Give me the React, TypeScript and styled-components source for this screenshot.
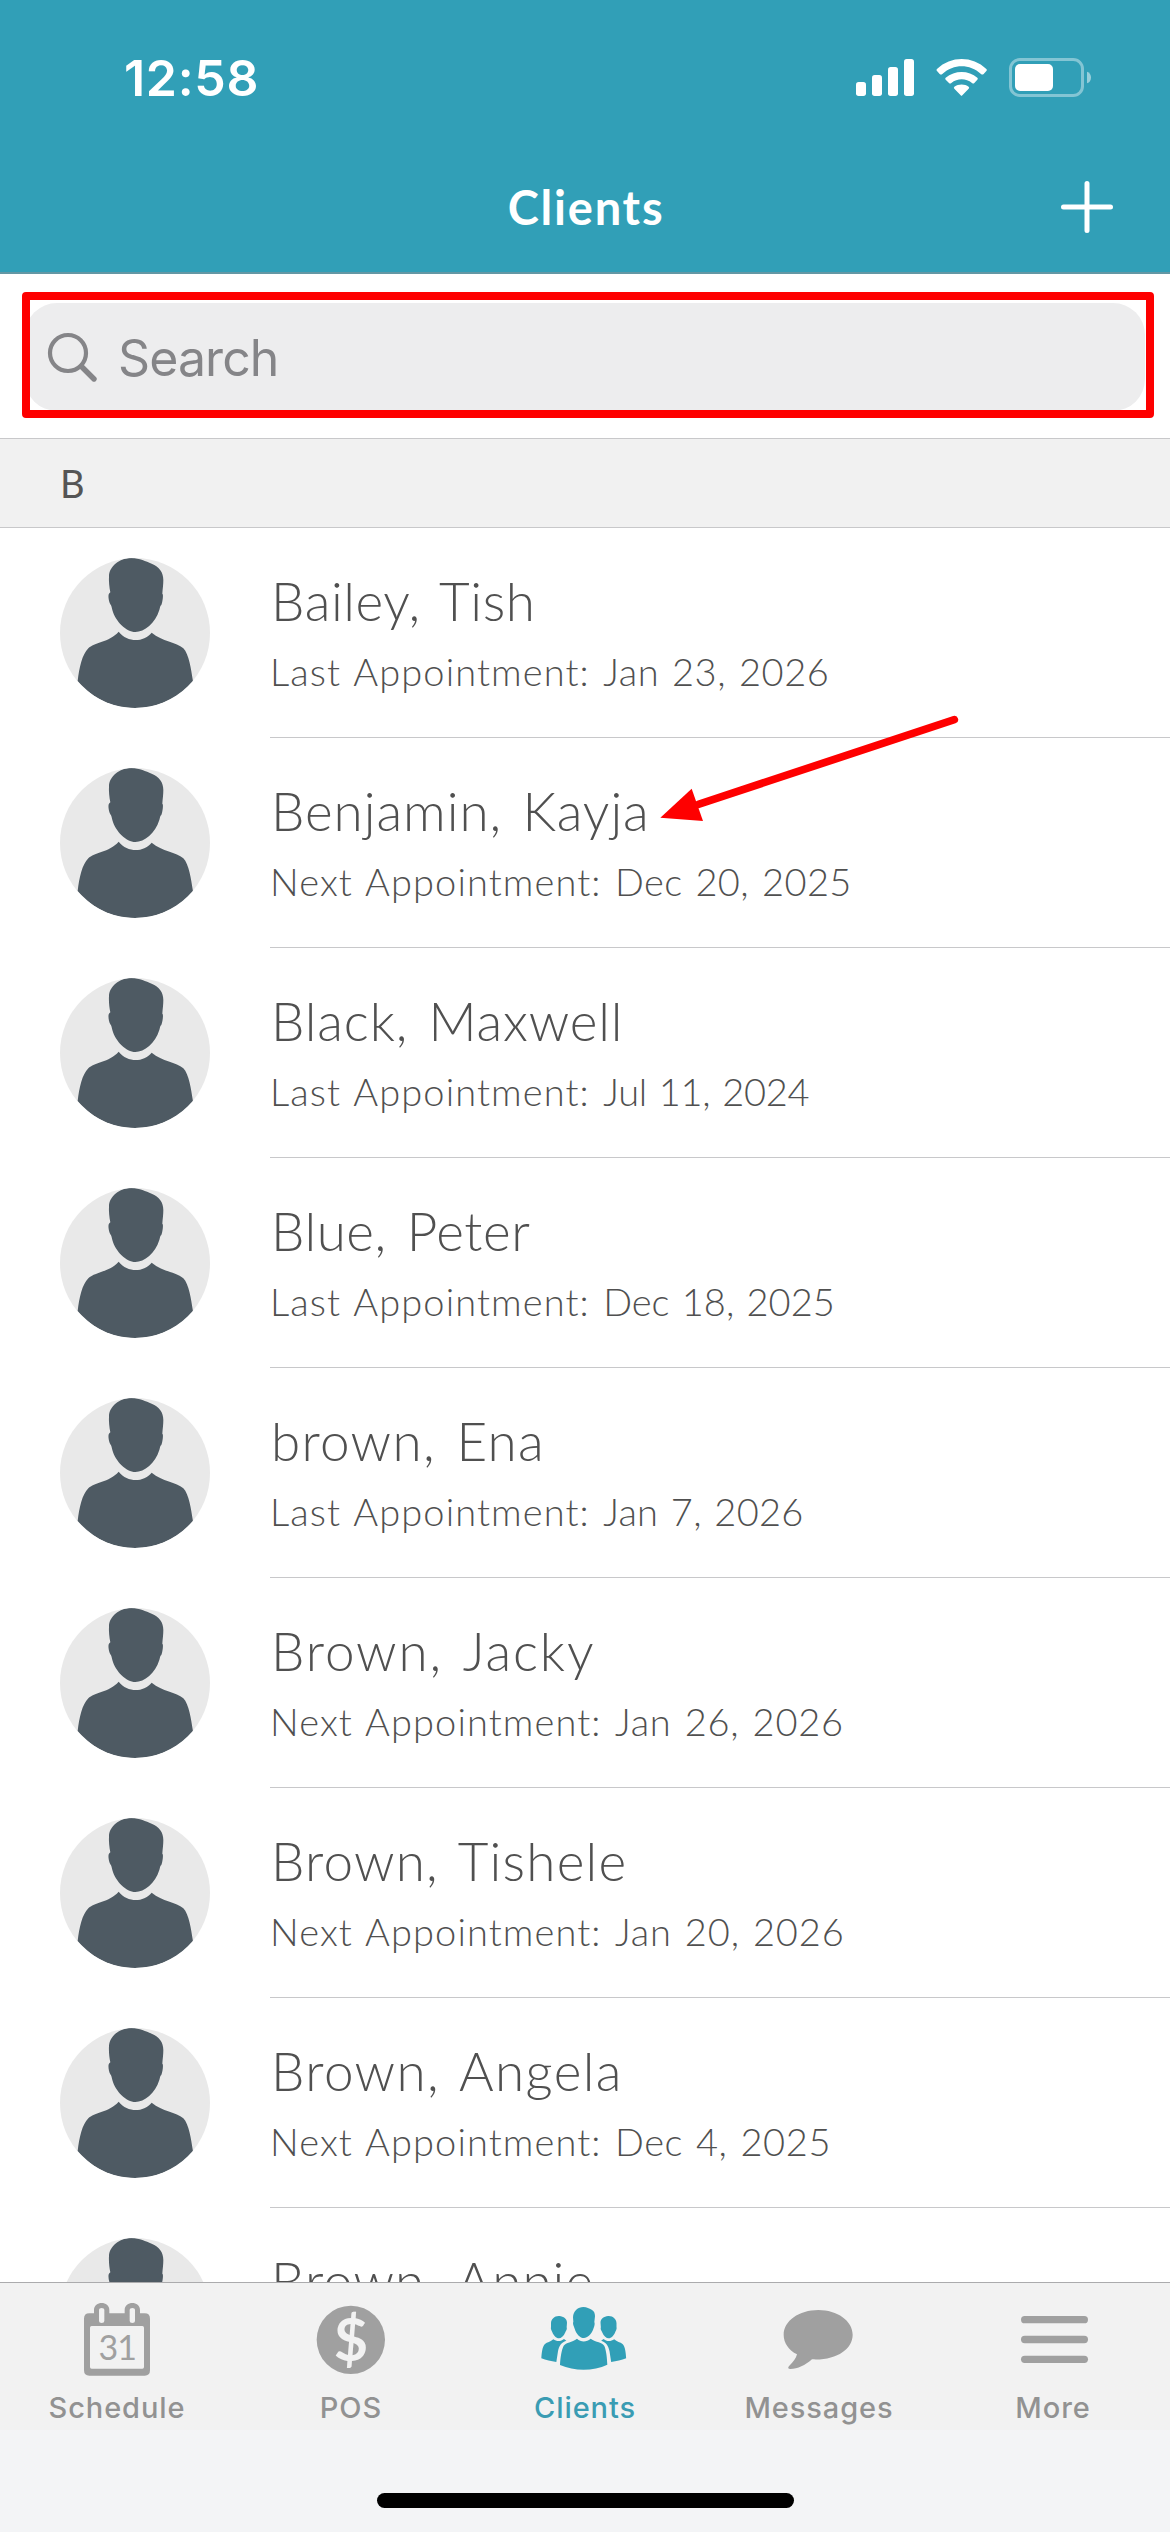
import React from "react";
import styled, { createGlobalStyle } from "styled-components";

const GlobalStyle = createGlobalStyle`
  body { margin: 0; background: #fff; }
  * { box-sizing: border-box; }
  svg { display: block; }
`;

const teal = "#319fb7";
const tabGray = "#a0a0a0";

const Screen = styled.div`
  position: relative;
  display: flex;
  flex-direction: column;
  width: 1170px;
  height: 2532px;
  overflow: hidden;
  background: #fff;
  font-family: Lato, "Noto Sans", sans-serif;
`;

const Header = styled.header`
  display: flex;
  flex-direction: column;
  height: 274px;
  flex: none;
  background: ${teal};
  border-bottom: 2px solid #6397a4;
  color: #fff;
`;

const StatusBar = styled.div`
  display: flex;
  justify-content: space-between;
  align-items: center;
  height: 141px;
  padding: 14px 78px 0 124px;
`;

const Time = styled.time`
  font: 600 50px/60px Inter, sans-serif;
  letter-spacing: 0.7px;
`;

const NavBar = styled.div`
  display: grid;
  grid-template-columns: 1fr auto 1fr;
  align-items: center;
  height: 131px;
  padding: 0 56px;
`;

const Title = styled.h1`
  grid-column: 2;
  margin: 0;
  padding-left: 2px;
  font-size: 47px;
  line-height: 60px;
  font-weight: 700;
  letter-spacing: 1.8px;
`;

const AddButton = styled.button`
  justify-self: end;
  padding: 0;
  border: 0;
  background: none;
`;

const SearchArea = styled.div`
  position: relative;
  flex: none;
  height: 164px;
  padding: 29px 25px 0;
`;

const SearchField = styled.div`
  display: flex;
  align-items: center;
  gap: 20px;
  height: 108px;
  padding-left: 22px;
  border-radius: 32px;
  background: #ededee;
  font: 400 50px/60px Inter, sans-serif;
  letter-spacing: -0.9px;
  color: #858588;
`;

const SearchLabel = styled.span`
  padding-top: 1px;
`;

const Highlight = styled.div`
  position: absolute;
  left: 22px;
  top: 18px;
  width: 1132px;
  height: 126px;
  border: 8px solid #fe0000;
  border-radius: 4px;
`;

const SectionHeader = styled.h2`
  display: flex;
  align-items: center;
  flex: none;
  height: 90px;
  margin: 0;
  padding: 0 0 1px 60px;
  border: solid #c8c8ca;
  border-width: 1px 0;
  background: #f1f1f1;
  color: #555;
  font-size: 38px;
  font-weight: 400;
`;

const List = styled.ul`
  flex: 1;
  min-height: 0;
  margin: 0;
  padding: 0;
  overflow: hidden;
  list-style: none;
`;

const Row = styled.li`
  display: flex;
  height: 210px;
  padding-left: 60px;
  gap: 60px;
`;

const Avatar = styled.svg`
  flex: none;
  width: 150px;
  height: 150px;
  margin-top: 30px;
`;

const Details = styled.div`
  flex: 1;
  padding-top: 41px;
  border-bottom: 1px solid #c8c8ca;
  color: #505050;
  white-space: nowrap;
`;

const Name = styled.div<{ $tracking: number }>`
  padding-left: 1px;
  font-size: 53px;
  line-height: 64px;
  font-weight: 300;
  word-spacing: 5px;
  letter-spacing: ${(p) => p.$tracking}px;
`;

const Appointment = styled.div`
  margin-top: 13px;
  font-size: 38px;
  line-height: 50px;
  font-weight: 300;
  word-spacing: 2px;
  letter-spacing: 1.1px;
`;

const AppointmentDate = styled.span<{ $tracking: number }>`
  letter-spacing: ${(p) => p.$tracking}px;
`;

const TabBar = styled.nav`
  display: grid;
  grid-template-columns: repeat(5, 1fr);
  flex: none;
  height: 148px;
  padding-top: 13px;
  border-top: 1px solid #ababad;
  background: #f2f2f2;
`;

const Tab = styled.div<{ $active?: boolean }>`
  display: flex;
  flex-direction: column;
  align-items: center;
  gap: 8px;
  color: ${(p) => (p.$active ? "#3a9cb3" : "#929292")};
  font: 500 29px/40px Inter, sans-serif;
  letter-spacing: 0.9px;
`;

const HomeArea = styled.div`
  display: flex;
  justify-content: center;
  align-items: flex-end;
  flex: none;
  height: 102px;
  padding-bottom: 24px;
  background: #f3f4f6;
`;

const HomeIndicator = styled.div`
  width: 417px;
  height: 15px;
  border-radius: 8px;
  background: #000;
`;

const Arrow = styled.svg`
  position: absolute;
  left: 640px;
  top: 690px;
`;

type Client = {
  name: string;
  nameTracking: number;
  kind?: "Last" | "Next";
  date?: string;
  dateTracking?: number;
};

const clients: Client[] = [
  { name: "Bailey, Tish", nameTracking: 0.6, kind: "Last", date: "Jan 23, 2026", dateTracking: 0.57 },
  { name: "Benjamin, Kayja", nameTracking: 0.95, kind: "Next", date: "Dec 20, 2025", dateTracking: 0.45 },
  { name: "Black, Maxwell", nameTracking: 0.85, kind: "Last", date: "Jul 11, 2024", dateTracking: -0.3 },
  { name: "Blue, Peter", nameTracking: 0.55, kind: "Last", date: "Dec 18, 2025", dateTracking: 0 },
  { name: "brown, Ena", nameTracking: 1.3, kind: "Last", date: "Jan 7, 2026", dateTracking: 0.28 },
  { name: "Brown, Jacky", nameTracking: 1.9, kind: "Next", date: "Jan 26, 2026", dateTracking: 0.8 },
  { name: "Brown, Tishele", nameTracking: 1.2, kind: "Next", date: "Jan 20, 2026", dateTracking: 0.85 },
  { name: "Brown, Angela", nameTracking: 1.4, kind: "Next", date: "Dec 4, 2025", dateTracking: 0.6 },
  { name: "Brown, Annie", nameTracking: 1.05 },
];

const StatusIcons = () => (
  <svg width="236" height="40" viewBox="228 174 708 120" fill="#fff">
    <rect x="228" y="246" width="30" height="42" rx="8" />
    <rect x="276" y="225" width="30" height="63" rx="8" />
    <rect x="324" y="201" width="30" height="87" rx="8" />
    <rect x="372" y="177" width="30" height="111" rx="8" />
    <path d="M471 207 C513 167 577 167 619 207 Q622 210 619 213 L611 222 Q607 225 603 222 C569 191 521 191 487 222 Q483 225 479 222 L471 213 Q468 210 471 207Z" />
    <path d="M497 233 C524 210 566 210 592 233 Q595 236 592 239 L583 249 Q580 252 576 249 C558 234 532 234 514 249 Q510 252 507 249 L497 239 Q494 236 497 233Z" />
    <path d="M523 260 C535 251 555 251 566 260 Q569 263 566 266 L547 286 Q544.500 289 542 286 L523 266 Q520 263 523 260Z" />
    <rect x="691.500" y="178.500" width="216" height="108" rx="28" fill="none" stroke="#fff" strokeOpacity=".4" strokeWidth="9" />
    <rect x="705" y="192" width="114" height="81" rx="15" />
    <path d="M921 215 C937 219 937 246 921 250Z" fillOpacity=".5" />
  </svg>
);

const Person = () => (
  <Avatar viewBox="60 54 450 450">
    <defs>
      <clipPath id="disc"><circle cx="285" cy="279" r="225" /></clipPath>
    </defs>
    <circle cx="285" cy="279" r="225" fill="#e9e9e9" />
    <g fill="#4e5a63" clipPath="url(#disc)">
      <path d="M207 108 C208 80 238 54 274 54 C300 55 317 64 335 71 C358 80 370 97 370 120 C370 134 368 148 367 161 C371 162 368 185 364 195 C360 197 360 204 358 210 C346 249 313 276 286 276 C259 276 226 244 217 210 C215 203 215 198 211 193 C206 184 203 164 208 160 L211 157 C208 142 206 124 207 108Z" />
      <path d="M236 275 C263 308 309 308 335 278 C367 305 409 306 430 325 C447 343 453 386 459 424 C410 480 350 504 285 504 C220 504 163 480 113 423 C118 383 126 344 145 325 C162 307 207 307 236 275Z" />
    </g>
  </Avatar>
);

const TabIcon = ({ x, color = tabGray, children }: { x: number; color?: string; children: React.ReactNode }) => (
  <svg width="102" height="84" viewBox={`${x} 198 306 252`} fill={color}>{children}</svg>
);

const SideClient = () => (
  <>
    <path d="M303 280 C303 267 314 257 328 258 C341 260 351 266 351 278 L350 291 C352 299 348 301 346 307 C341 319 333 325 327 325 C318 325 311 317 307 307 C306 302 301 298 303 290Z" />
    <path d="M310 328 C321 336 334 334 342 327 L349 332 C333 338 327 348 324 364 L319 396 C303 394 288 390 274 385 C275 368 277 349 285 342 C291 337 302 336 310 328Z" />
  </>
);

export default function App() {
  return (
    <Screen>
      <GlobalStyle />
      <Header>
        <StatusBar>
          <Time>12:58</Time>
          <StatusIcons />
        </StatusBar>
        <NavBar>
          <Title>Clients</Title>
          <AddButton aria-label="Add client">
            <svg width="54" height="54" viewBox="0 0 54 54" stroke="#fff" strokeWidth="5" strokeLinecap="round">
              <path d="M27 3.500V50.500M3.500 27H50.500" />
            </svg>
          </AddButton>
        </NavBar>
      </Header>

      <SearchArea>
        <SearchField>
          <svg width="51" height="51" viewBox="0 0 51 51" fill="none" stroke="#858588" strokeLinecap="round">
            <circle cx="21" cy="21" r="18" strokeWidth="4.200" />
            <path d="M34.500 34.500L47 47" strokeWidth="5.400" />
          </svg>
          <SearchLabel>Search</SearchLabel>
        </SearchField>
        <Highlight />
      </SearchArea>

      <SectionHeader>B</SectionHeader>

      <List>
        {clients.map((c) => (
          <Row key={c.name}>
            <Person />
            <Details>
              <Name $tracking={c.nameTracking}>{c.name}</Name>
              {c.date && (
                <Appointment>
                  {c.kind} Appointment: <AppointmentDate $tracking={c.dateTracking ?? 0}>{c.date}</AppointmentDate>
                </Appointment>
              )}
            </Details>
          </Row>
        ))}
      </List>

      <TabBar>
        <Tab>
          <TabIcon x={198}>
            <path fillRule="evenodd" d="M268 250 H282 V240 C282 212 328 212 328 240 V250 H374 V240 C374 212 420 212 420 240 V250 H434 Q450 250 450 266 V421 Q450 437 434 437 H268 Q252 437 252 421 V266 Q252 250 268 250Z M297 239 V273 Q297 279 305 279 Q313 279 313 273 V239 Q313 234 305 234 Q297 234 297 239Z M389 239 V273 Q389 279 397 279 Q405 279 405 273 V239 Q405 234 397 234 Q389 234 389 239Z M270 293 V411 Q270 416 275 416 H427 Q432 416 432 411 V293 Q432 288 427 288 H275 Q270 288 270 293Z" />
            <text x="352" y="390" textAnchor="middle" fontFamily="Lato" fontSize="102" fontWeight="400" letterSpacing="-3">31</text>
          </TabIcon>
          Schedule
        </Tab>
        <Tab>
          <TabIcon x={900}>
            <circle cx="1052.500" cy="329.500" r="102.500" />
            <text x="1053" y="393" textAnchor="middle" fontFamily="Lato" fontSize="178" fontWeight="700" fill="#f2f2f2">$</text>
          </TabIcon>
          POS
        </Tab>
        <Tab $active>
          <TabIcon x={252} color={teal}>
            <SideClient />
            <g transform="translate(802.500 0) scale(-1 1)"><SideClient /></g>
            <path d="M369 262 C370 243 384 231 400 231 C411 231 417 236 425 239 C433 243 435 251 435 259 L433 276 C436 284 431 293 430 297 C424 313 412 324 402 324 C390 324 379 312 374 296 C373 291 367 281 370 275Z" />
            <path d="M381 326 C393 337 409 337 422 326 C438 337 457 336 463 348 C469 362 471 384 472 404 C430 424 374 424 330 405 C331 386 334 361 341 347 C348 337 366 337 381 326Z" />
          </TabIcon>
          Clients
        </Tab>
        <Tab>
          <TabIcon x={954}>
            <path d="M1105 240 C1162 240 1208 273 1208 314 C1208 358 1158 392 1086 388 C1065 406 1044 417 1021 417 Q1010 415 1018 407 C1030 396 1038 385 1041 373 C1016 360 1001 339 1001 314 C1001 273 1047 240 1105 240Z" />
          </TabIcon>
          Messages
        </Tab>
        <Tab>
          <TabIcon x={456}>
            <rect x="513" y="258" width="201" height="22" rx="11" />
            <rect x="513" y="317.500" width="201" height="22" rx="11" />
            <rect x="513" y="377" width="201" height="22" rx="11" />
          </TabIcon>
          More
        </Tab>
      </TabBar>
      <HomeArea>
        <HomeIndicator />
      </HomeArea>

      <Arrow width="340" height="140" viewBox="0 0 1020 420" fill="#fe0000">
        <path d="M175 343L943 89" stroke="#fe0000" strokeWidth="23" strokeLinecap="round" />
        <path d="M61 383L155 296L189 393Z" />
      </Arrow>
    </Screen>
  );
}
